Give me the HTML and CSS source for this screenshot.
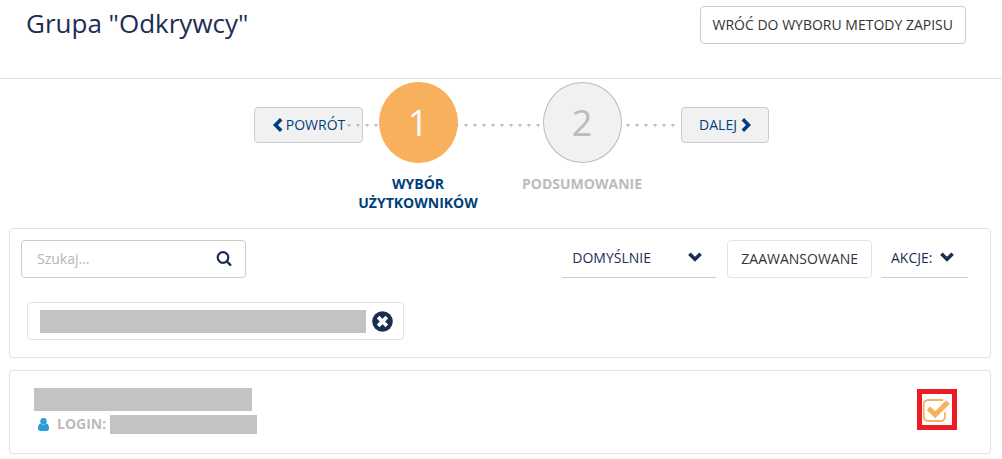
FILE: index.html
```html
<!DOCTYPE html>
<html lang="pl">
<head>
<meta charset="utf-8">
<title>Grupa "Odkrywcy"</title>
<link rel="stylesheet" href="styles.css">
</head>
<body>
<header class="header">
  <h1 class="title">Grupa "Odkrywcy"</h1>
  <button type="button" class="btn back-method">WRÓĆ DO WYBORU METODY ZAPISU</button>
</header>
<main>
  <nav class="wizard" aria-label="Kroki">
    <button type="button" class="btn nav-btn prev">
      <svg class="chev-side" viewBox="0 0 11 14" aria-hidden="true"><path d="M9.200 1.300 3.500 7l5.700 5.700"/></svg>
      <span>POWRÓT</span>
    </button>
    <ol class="steps">
      <li class="step active"><span class="circle">1</span><span class="step-label">WYBÓR UŻYTKOWNIKÓW</span></li>
      <li class="step"><span class="circle">2</span><span class="step-label">PODSUMOWANIE</span></li>
    </ol>
    <button type="button" class="btn nav-btn next">
      <span>DALEJ</span>
      <svg class="chev-side" viewBox="0 0 11 14" aria-hidden="true"><path d="M2.800 1.300 8.500 7l-5.700 5.700"/></svg>
    </button>
  </nav>

  <section class="card filters">
    <div class="toolbar">
      <form class="search" role="search">
        <input class="search-input" type="text" placeholder="Szukaj..." aria-label="Szukaj">
        <button type="button" class="icon-btn" aria-label="Szukaj">
          <svg width="16" height="16" viewBox="0 0 16 16" aria-hidden="true"><circle cx="7" cy="6.500" r="5.300" fill="none" stroke="currentColor" stroke-width="2.200"/><path d="m11 10.500 3.300 3.300" stroke="currentColor" stroke-width="2.400" stroke-linecap="round"/></svg>
        </button>
      </form>
      <div class="dropdown sort">
        <select class="select" aria-label="Sortowanie"><option>DOMYŚLNIE</option></select>
        <svg class="chev-down" viewBox="0 0 14 10" aria-hidden="true"><path d="M1.400 1.800 7 7.300l5.600-5.500"/></svg>
      </div>
      <button type="button" class="btn advanced">ZAAWANSOWANE</button>
      <div class="dropdown actions">
        <select class="select" aria-label="Akcje"><option>AKCJE:</option></select>
        <svg class="chev-down" viewBox="0 0 14 10" aria-hidden="true"><path d="M1.400 1.800 7 7.300l5.600-5.500"/></svg>
      </div>
    </div>
    <div class="chip">
      <span class="redacted chip-name"></span>
      <button type="button" class="icon-btn" aria-label="Usuń">
        <svg width="21" height="21" viewBox="0 0 21 21" aria-hidden="true"><circle cx="10.500" cy="10.500" r="10.300" fill="currentColor"/><path d="m7.500 7.500 6 6m0-6-6 6" stroke="#fff" stroke-width="3.800" stroke-linecap="square"/></svg>
      </button>
    </div>
  </section>

  <section class="card user">
    <div class="user-info">
      <div class="redacted user-name"></div>
      <div class="login">
        <svg width="11" height="13" viewBox="0 0 11 13" aria-hidden="true"><circle cx="5.500" cy="3.300" r="3.200" fill="#2a9ddb"/><path d="M2.600 5.600C.8 6 0 7.800 0 10.300 0 12 .9 13 2.400 13h6.200c1.500 0 2.400-1 2.400-2.700 0-2.500-.8-4.300-2.600-4.700-1.600 1.500-4.200 1.500-5.800 0Z" fill="#2a9ddb"/></svg>
        <span class="login-label">LOGIN:</span>
        <span class="redacted login-name"></span>
      </div>
    </div>
    <label class="check">
      <input class="check-input" type="checkbox" checked aria-label="Wybierz użytkownika">
      <svg class="check-icon" width="30" height="31" viewBox="0 0 30 31" aria-hidden="true"><path d="M20.500 6H6A4.300 4.300 0 0 0 1.700 10.300V22.700A4.300 4.300 0 0 0 6 27h12.700a4.300 4.300 0 0 0 4.300-4.300V19" fill="none" stroke="#f7b15c" stroke-width="1.800" stroke-linecap="round"/><path d="m6.500 14.200 6.700 6.500L26 7.900" fill="none" stroke="#f7b15c" stroke-width="5"/></svg>
    </label>
  </section>
</main>
</body>
</html>
```
FILE: styles.css
```css
* { box-sizing: border-box; }
body {
  margin: 0;
  background: #fff;
  color: #1c2d53;
  font: 14px/20px "Open Sans", "Noto Sans", sans-serif;
}
button, input, select { font: inherit; color: inherit; }
button { cursor: pointer; }
.header {
  display: flex;
  justify-content: space-between;
  align-items: flex-start;
  height: 79px;
  padding: 6px 36px 0 26px;
  border-bottom: 1px solid #e3e3e3;
}
.title { margin: 0; font-size: 26px; line-height: 34px; font-weight: 400; }
.btn {
  border: 1px solid #ccc;
  border-radius: 4px;
  background: #fff;
  white-space: nowrap;
}
.back-method { height: 38px; padding: 0 12px; color: #333; }

.wizard {
  display: flex;
  justify-content: center;
  align-items: flex-start;
  padding: 3px 0 0 21px;
}
.nav-btn {
  display: flex;
  align-items: center;
  justify-content: center;
  gap: 3px;
  height: 36px;
  margin-top: 25px;
  padding: 0;
  background: #f1f1f1;
  color: #003e7e;
}
.prev { width: 109px; }
.next { width: 88px; }
.chev-side { width: 11px; height: 14px; fill: none; stroke: currentColor; stroke-width: 3.6; }
.steps {
  position: relative;
  display: flex;
  margin: 0 17px 0 -27px;
  padding: 0;
  list-style: none;
}
.steps::before {
  content: "";
  position: absolute;
  top: 42px;
  left: 11px;
  right: -16px;
  height: 3px;
  background: radial-gradient(circle at 2px 1px, #bbb 1px, transparent 2px) 0 0 / 9px 3px repeat-x;
}
.step {
  display: flex;
  flex-direction: column;
  align-items: center;
  width: 164px;
  color: #bbb;
  font-weight: 700;
}
.circle {
  z-index: 1;
  display: flex;
  align-items: center;
  justify-content: center;
  width: 79px;
  height: 81px;
  border: 1px solid #bbb;
  border-radius: 50%;
  background: #f1f1f1;
  font-size: 36px;
  font-weight: 400;
}
.step-label { width: 130px; margin-top: 11px; line-height: 19px; text-align: center; }
.active { color: #003e7e; }
.active .circle { border-color: #f7b15c; background: #f7b15c; color: #fff; }

.card { margin: 0 11px 12px 9px; border: 1px solid #e3e3e3; border-radius: 4px; }
.filters { margin-top: 16px; padding: 11px 22px 17px 11px; }
.toolbar { display: flex; align-items: flex-start; }
.search {
  display: flex;
  align-items: center;
  width: 225px;
  height: 38px;
  margin-right: auto;
  padding: 0 13px 0 15px;
  border: 1px solid #ccc;
  border-radius: 4px;
}
.search-input { flex: 1; min-width: 0; padding: 0; border: 0; outline: 0; background: none; }
.search-input::placeholder { color: #b5b5b5; opacity: 1; }
.icon-btn { display: flex; padding: 0; border: 0; background: none; }
.dropdown { position: relative; height: 38px; border-bottom: 1px solid #ccc; }
.select {
  width: 100%;
  height: 36px;
  padding: 0 10px;
  border: 0;
  outline: 0;
  background: none;
  appearance: none;
}
.sort { width: 154px; }
.actions { width: 87px; }
.chev-down {
  position: absolute;
  top: 12px;
  right: 14px;
  width: 14px;
  height: 10px;
  fill: none;
  stroke: currentColor;
  stroke-width: 3.6;
  pointer-events: none;
}
.advanced { height: 38px; margin: 0 9px 0 11px; padding: 0 13px; border-color: #e3e3e3; color: #333; }
.chip {
  display: inline-flex;
  align-items: center;
  gap: 6px;
  height: 38px;
  margin: 24px 0 0 6px;
  padding: 0 10px 0 12px;
  border: 1px solid #e3e3e3;
  border-radius: 4px;
  vertical-align: top;
}
.redacted { background: #c3c3c3; }
.chip-name { width: 326px; height: 23px; }

.user {
  display: flex;
  align-items: flex-start;
  justify-content: space-between;
  padding: 17px 33px 19px 24px;
}
.user-name { width: 218px; height: 23px; }
.login {
  display: flex;
  align-items: center;
  margin-top: 3px;
  padding-left: 4px;
  color: #bbb;
  font-weight: 700;
}
.login-label { width: 53px; margin-left: 8px; }
.login-name { width: 147px; height: 19px; }
.check { position: relative; width: 40px; height: 41px; margin-top: 1px; border: 5px solid #ed1c24; }
.check-input { width: 30px; height: 31px; margin: 0; appearance: none; }
.check-icon { position: absolute; top: 0; left: 0; pointer-events: none; }
```
